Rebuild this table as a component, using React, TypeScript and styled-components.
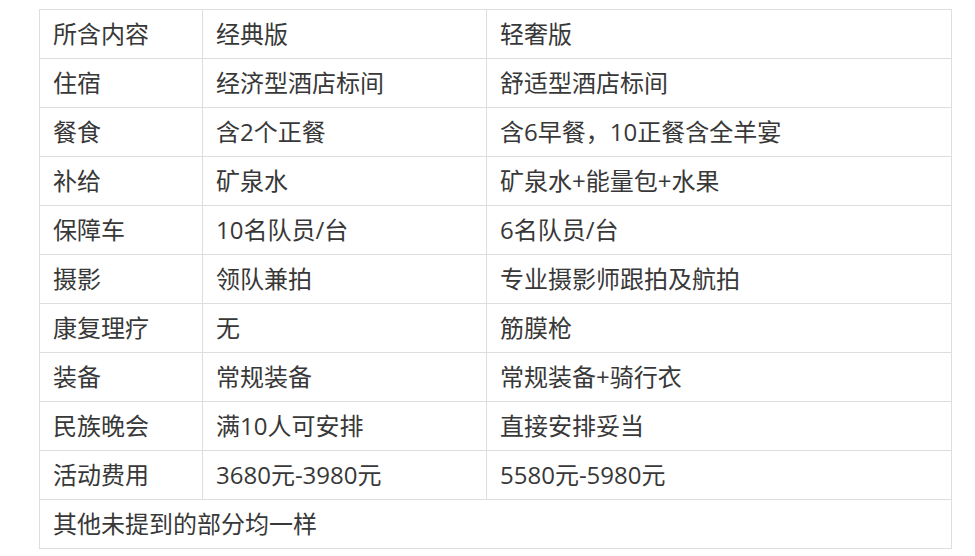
import React from 'react';
import styled, { createGlobalStyle } from 'styled-components';

const GlobalStyle = createGlobalStyle`
    html, body {
        margin: 0;
        padding: 0;
        background: #fff;
    }
    body {
        font-family: "Open Sans", "Noto Sans CJK SC", sans-serif;
    }
`;

const Page = styled.div`
    padding: 9px 0 0 39px;
`;

const Table = styled.table`
    border-collapse: collapse;
    width: 913px;
    table-layout: fixed;
    color: #383838;
    font-size: 24px;
`;

const Cell = styled.td<{ $width?: number }>`
    border: 1px solid #dedede;
    height: 48px;
    padding: 0 13px;
    line-height: 48px;
    box-sizing: border-box;
    white-space: nowrap;
    vertical-align: middle;
    ${p => (p.$width ? `width: ${p.$width}px;` : '')}
`;

const rows: [string, string, string][] = [
    ['所含内容', '经典版', '轻奢版'],
    ['住宿', '经济型酒店标间', '舒适型酒店标间'],
    ['餐食', '含2个正餐', '含6早餐，10正餐含全羊宴'],
    ['补给', '矿泉水', '矿泉水+能量包+水果'],
    ['保障车', '10名队员/台', '6名队员/台'],
    ['摄影', '领队兼拍', '专业摄影师跟拍及航拍'],
    ['康复理疗', '无', '筋膜枪'],
    ['装备', '常规装备', '常规装备+骑行衣'],
    ['民族晚会', '满10人可安排', '直接安排妥当'],
    ['活动费用', '3680元-3980元', '5580元-5980元'],
];

const App = () => (
    <>
        <GlobalStyle />
        <Page>
            <Table>
                <tbody>
                    {rows.map(([item, classic, luxury], i) => (
                        <tr key={item}>
                            <Cell $width={i === 0 ? 163 : undefined}>{item}</Cell>
                            <Cell $width={i === 0 ? 284 : undefined}>{classic}</Cell>
                            <Cell>{luxury}</Cell>
                        </tr>
                    ))}
                    <tr>
                        <Cell colSpan={3}>其他未提到的部分均一样</Cell>
                    </tr>
                </tbody>
            </Table>
        </Page>
    </>
);

export default App;
